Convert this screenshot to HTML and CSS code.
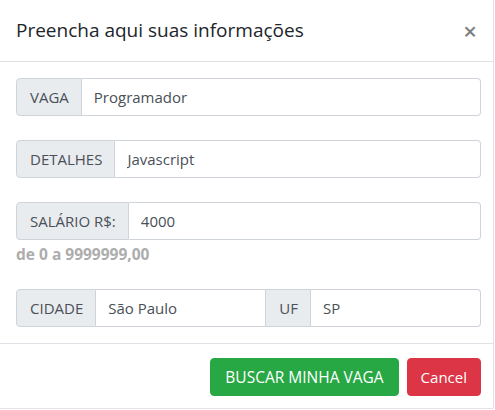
FILE: index.html
```html
<!DOCTYPE html>
<html lang="pt-BR">
<head>
<meta charset="utf-8">
<title>Modal</title>
<link rel="stylesheet" href="styles.css">
</head>
<body>
<div class="modal">
  <div class="modal-header">
    <h5 class="modal-title">Preencha aqui suas informações</h5>
    <button class="close" type="button">×</button>
  </div>
  <div class="modal-body">
    <div class="input-group group-gap">
      <span class="addon">VAGA</span>
      <input class="field" type="text" value="Programador">
    </div>
    <div class="input-group group-gap">
      <span class="addon">DETALHES</span>
      <input class="field" type="text" value="Javascript">
    </div>
    <div class="form-group">
      <div class="input-group">
        <span class="addon">SALÁRIO R$:</span>
        <input class="field" type="text" value="4000">
      </div>
      <small class="hint">de 0 a 9999999,00</small>
    </div>
    <div class="input-group">
      <span class="addon">CIDADE</span>
      <input class="field" type="text" value="São Paulo">
      <span class="addon addon-mid">UF</span>
      <input class="field" type="text" value="SP">
    </div>
  </div>
  <div class="modal-footer">
    <button class="btn btn-success" type="button">BUSCAR MINHA VAGA</button>
    <button class="btn btn-danger" type="button">Cancel</button>
  </div>
</div>
</body>
</html>
```

FILE: styles.css
```css
* { box-sizing: border-box; }
html, body { margin: 0; padding: 0; background: #fff; }
body {
  font-family: "Open Sans", "Noto Sans", sans-serif;
  font-size: 15px;
  color: #212529;
}
.modal {
  width: 494px;
  height: 409px;
  border-right: 1px solid #e4e4e4;
  border-bottom: 1px solid #e4e4e4;
  display: flex;
  flex-direction: column;
}
.modal-header {
  display: flex;
  align-items: center;
  justify-content: space-between;
  height: 62px;
  padding: 0 16px;
  border-bottom: 1px solid #dee2e6;
}
.modal-title {
  margin: 0;
  font-size: 19px;
  font-weight: 500;
  line-height: 30px;
  color: #212529;
  padding-bottom: 1px;
}
.close {
  border: 0;
  background: transparent;
  padding: 0;
  font-family: "Open Sans", sans-serif;
  font-size: 24px;
  font-weight: 600;
  line-height: 1;
  color: #000;
  opacity: .5;
}
.modal-body {
  padding: 16px 12px 16px 16px;
}
.input-group {
  display: flex;
  align-items: stretch;
  height: 38px;
}
.group-gap { margin-bottom: 24px; }
.form-group { margin-bottom: 24px; }
.addon {
  display: flex;
  align-items: center;
  padding: 0 12px 0 13px;
  background: #e9ecef;
  border: 1px solid #ced4da;
  color: #495057;
  font-size: 15px;
  border-radius: 4px 0 0 4px;
  white-space: nowrap;
}
.addon-mid {
  border-radius: 0;
  margin-left: -1px;
}
.field {
  flex: 1 1 0;
  min-width: 0;
  border: 1px solid #ced4da;
  border-left: 0;
  border-radius: 0 4px 4px 0;
  padding: 0 12px;
  font-family: inherit;
  font-size: 15px;
  color: #495057;
  background: #fff;
  outline: none;
}
.input-group .field:not(:last-child) {
  border-radius: 0;
}
.hint {
  display: block;
  margin-top: 4px;
  font-size: 15.5px;
  font-weight: 700;
  line-height: 21px;
  color: #adadad;
}
.modal-footer {
  display: flex;
  justify-content: flex-end;
  align-items: center;
  gap: 8px;
  padding: 14px 12px 0 16px;
  border-top: 1px solid #dee2e6;
}
.btn {
  border: 1px solid transparent;
  border-radius: 4px;
  height: 38px;
  padding: 0 13px;
  font-family: inherit;
  font-size: 15px;
  color: #fff;
}
.btn-success { background: #28a745; border-color: #28a745; padding: 0 14px; font-size: 15.5px; }
.btn-danger { background: #dc3545; border-color: #dc3545; }
```
